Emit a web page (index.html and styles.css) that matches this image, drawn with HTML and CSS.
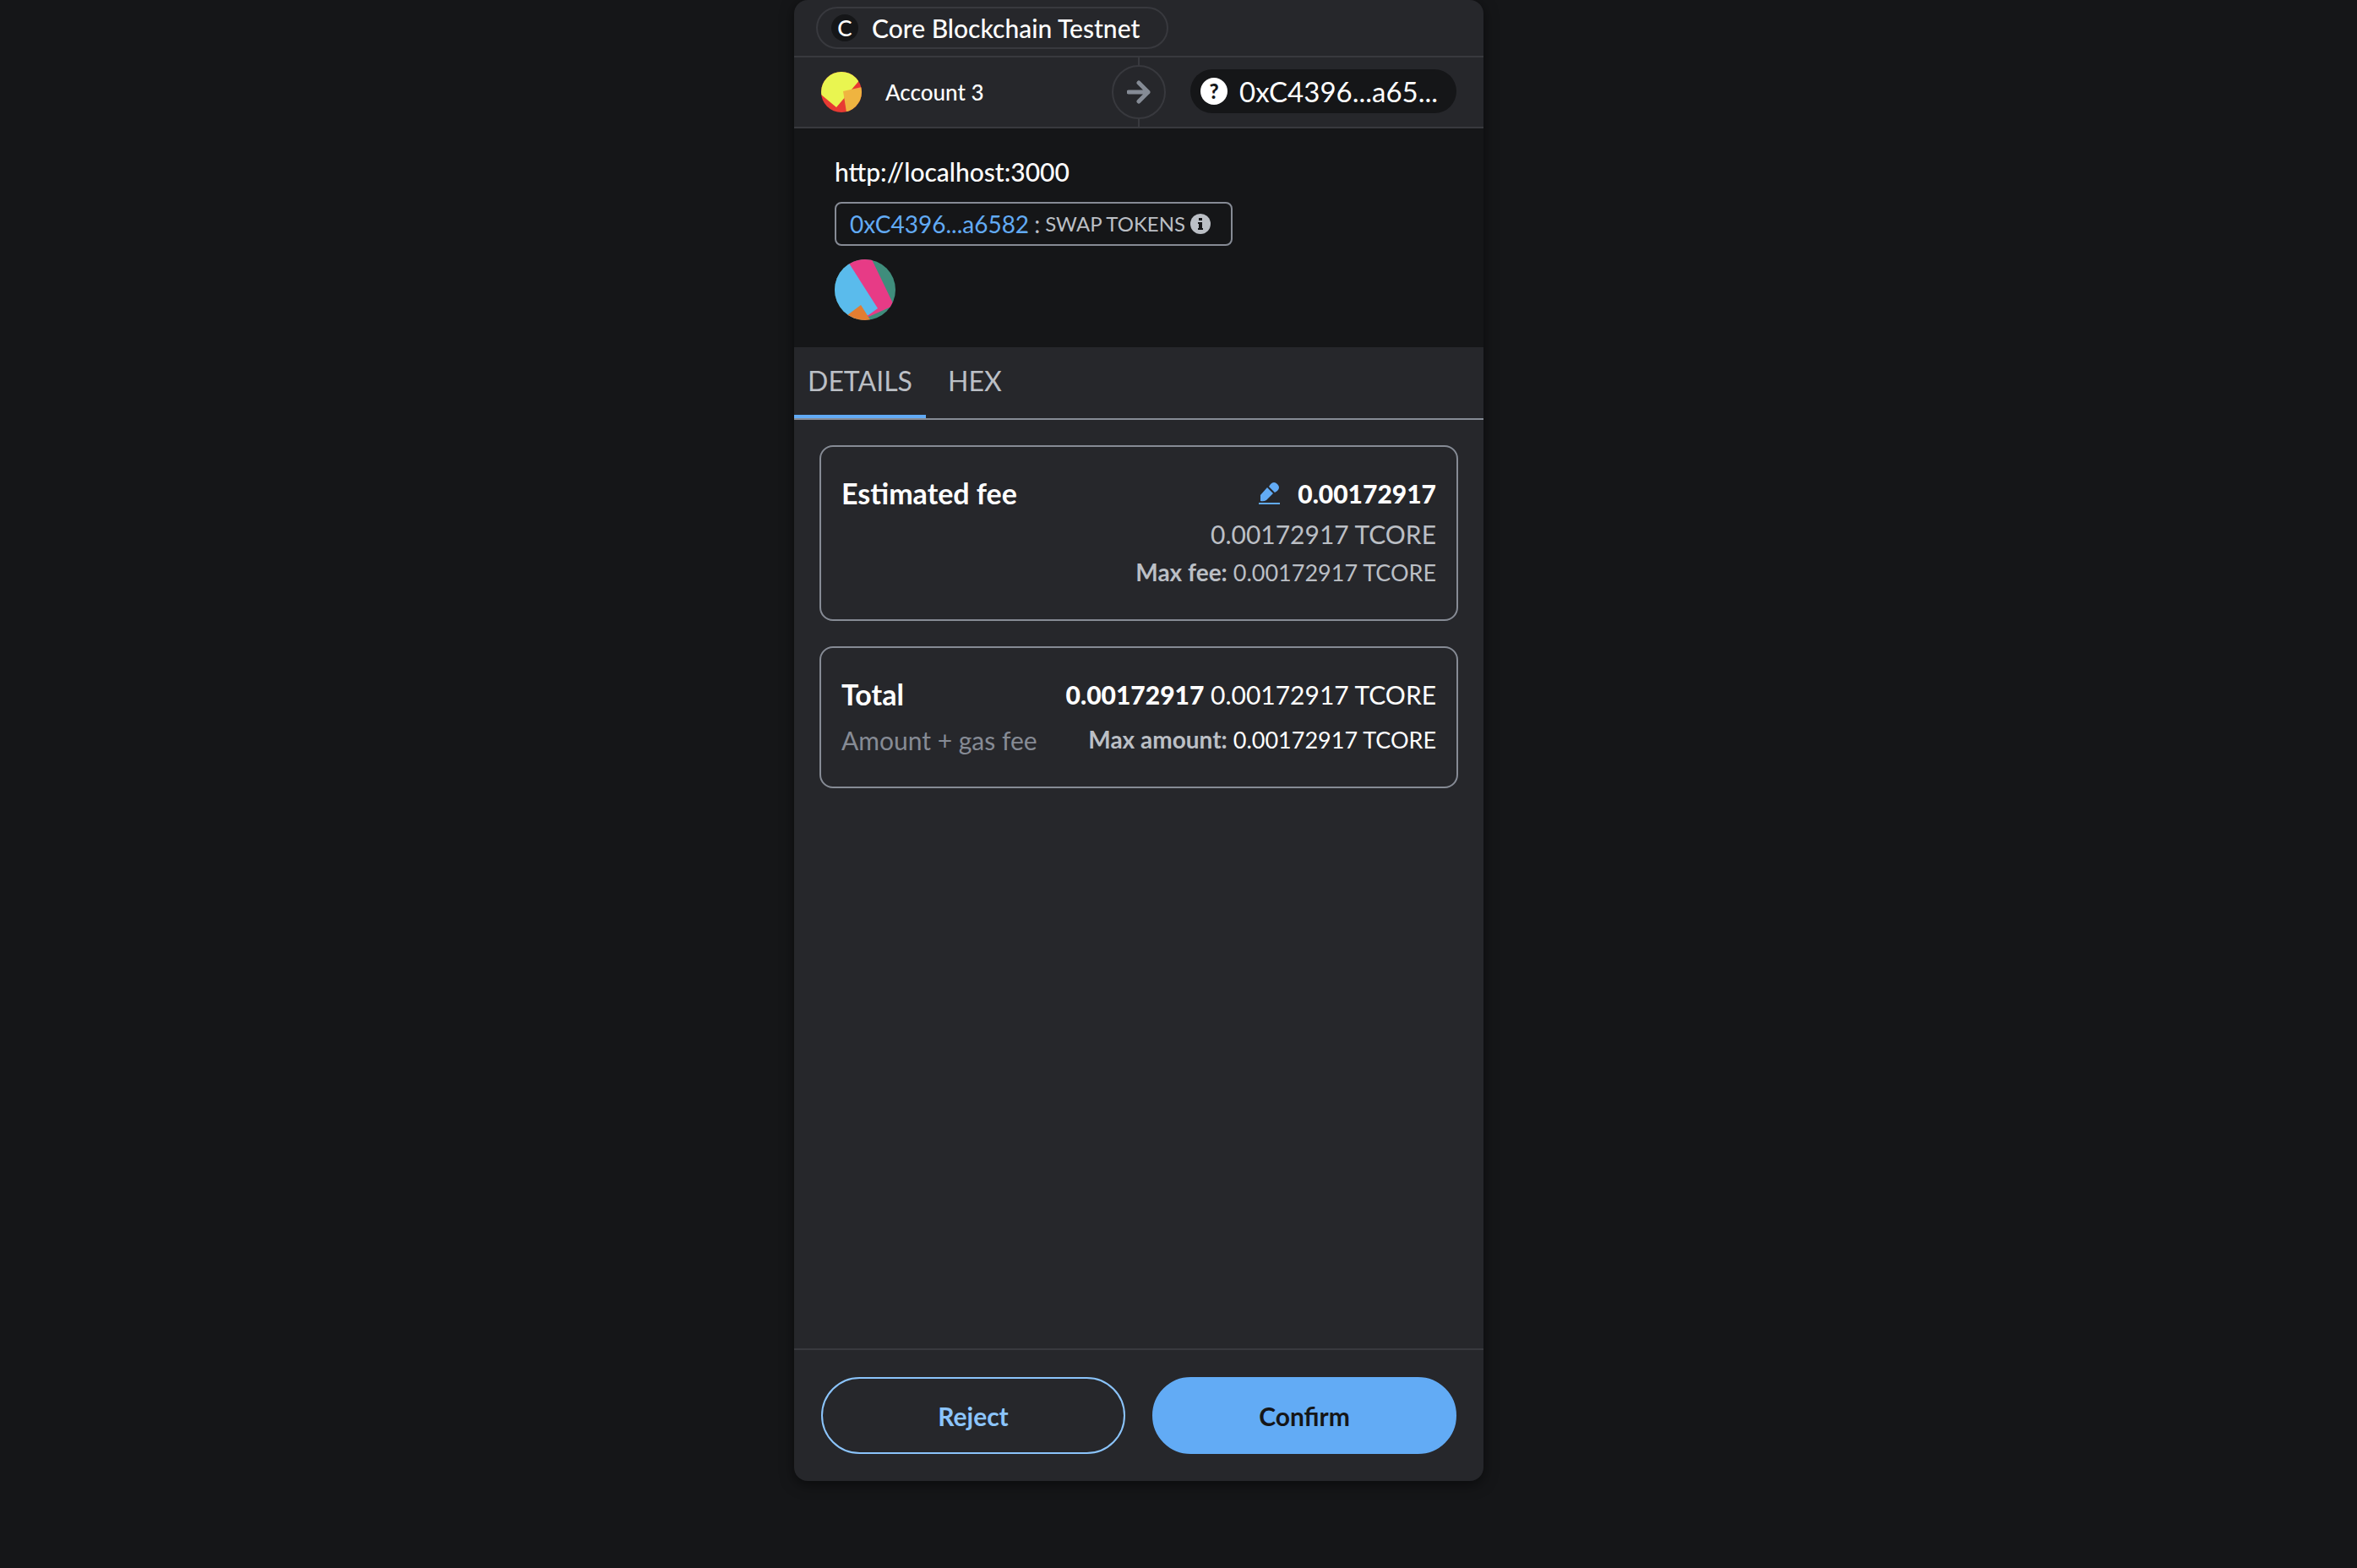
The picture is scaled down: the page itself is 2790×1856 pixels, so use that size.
FILE: index.html
```html
<!DOCTYPE html>
<html lang="en">
<head>
<meta charset="utf-8">
<title>Confirm transaction</title>
<link rel="stylesheet" href="styles.css">
</head>
<body>
<main class="panel">
  <header class="network-bar">
    <div class="network">
      <span class="network-icon">C</span>
      <span>Core Blockchain Testnet</span>
    </div>
  </header>

  <section class="parties">
    <div class="sender">
      <svg class="avatar-small" viewBox="0 0 48 48" aria-hidden="true">
        <clipPath id="sender-clip"><circle cx="24" cy="24" r="24"/></clipPath>
        <g clip-path="url(#sender-clip)">
          <rect width="48" height="48" fill="#e73a33"/>
          <path d="M0 0H48V7L18 42L0 27Z" fill="#e9f550"/>
          <path d="M26 23L48 18V48H30Z" fill="#efb440"/>
        </g>
      </svg>
      <span class="sender-name">Account 3</span>
    </div>
    <div class="arrow">
      <span class="arrow-circle">
        <svg width="28" height="28" viewBox="0 0 28 28" aria-hidden="true">
          <path d="M2 14H25M14 3L25 14L14 25" fill="none" stroke="#858b95" stroke-width="5" stroke-linecap="round" stroke-linejoin="round"/>
        </svg>
      </span>
    </div>
    <div class="recipient">
      <button class="recipient-pill" type="button">
        <span class="question">?</span>
        <span class="recipient-address">0xC4396...a65...</span>
      </button>
    </div>
  </section>

  <section class="summary">
    <div class="origin">http://localhost:3000</div>
    <div class="action">
      <a class="contract" href="#contract">0xC4396...a6582</a>
      <span class="colon">:</span>
      <span class="method">SWAP TOKENS</span>
      <svg class="info" viewBox="0 0 24 24" role="img" aria-label="Information">
        <circle cx="12" cy="12" r="12" fill="#bbbfc5"/>
        <path d="M10 5H14V8H10ZM9 10H14V17H15V19H9V17H10V12H9Z" fill="#151618"/>
      </svg>
    </div>
    <svg class="avatar-large" viewBox="0 0 72 72" aria-hidden="true">
      <clipPath id="contract-clip"><circle cx="36" cy="36" r="36"/></clipPath>
      <g clip-path="url(#contract-clip)">
        <rect width="72" height="72" fill="#3f8d7c"/>
        <path d="M17 5L12 -4H42L69 52L67 56L40 68L30 60Z" fill="#e73b86"/>
        <path d="M-4 0H14L51 58L40 66L20 72L0 72Z" fill="#5abbec"/>
        <path d="M15 66L31 54L43 73H15Z" fill="#e27d31"/>
      </g>
    </svg>
  </section>

  <nav class="tabs">
    <button class="tab tab-active" type="button">DETAILS</button>
    <button class="tab" type="button">HEX</button>
  </nav>

  <section class="details">
    <article class="card">
      <div class="row">
        <h2 class="label">Estimated fee</h2>
        <div class="fee">
          <button class="edit" type="button" aria-label="Edit fee">
            <svg width="26" height="26" viewBox="0 0 26 26" aria-hidden="true">
              <path d="M2 22V15L10 6L17 13L9 21Q6 23 2 22ZM12 5L14 2Q18 -2 22 2Q26 6 22 10L19 12Z" fill="#62abf5"/>
              <path d="M0 24H25V26H0Z" fill="#62abf5"/>
            </svg>
          </button>
          <strong class="amount">0.00172917</strong>
        </div>
      </div>
      <div class="fee-native">0.00172917 TCORE</div>
      <div class="fee-max"><strong class="caption">Max fee:</strong> 0.00172917 TCORE</div>
    </article>

    <article class="card">
      <div class="row">
        <h2 class="label">Total</h2>
        <div><strong class="amount">0.00172917</strong> 0.00172917 TCORE</div>
      </div>
      <div class="row row-sub">
        <span class="hint">Amount + gas fee</span>
        <span class="max"><strong class="caption">Max amount:</strong> 0.00172917 TCORE</span>
      </div>
    </article>
  </section>

  <footer class="actions">
    <button class="button button-secondary" type="button">Reject</button>
    <button class="button button-primary" type="button">Confirm</button>
  </footer>
</main>
</body>
</html>
```
FILE: styles.css
```css
*, *::before, *::after { box-sizing: border-box; }

body {
  margin: 0;
  min-height: 100vh;
  padding: 0 94px 103px 0;
  display: flex;
  flex-direction: column;
  align-items: center;
  background: #151618;
  color: #fff;
  font-family: Lato, "Open Sans", sans-serif;
  font-size: 30px;
  font-weight: 400;
  line-height: 40px;
}

button {
  margin: 0;
  padding: 0;
  border: 0;
  background: none;
  color: inherit;
  font: inherit;
  cursor: pointer;
}

.panel {
  flex: 1;
  width: 100%;
  max-width: 816px;
  display: flex;
  flex-direction: column;
  overflow: hidden;
  background: #26272b;
  border-radius: 16px;
  box-shadow: 0 4px 16px rgba(0, 0, 0, 0.5);
}

.network-bar {
  display: flex;
  padding: 8px 26px;
  border-bottom: 2px solid #38393e;
}

.network {
  height: 50px;
  display: flex;
  align-items: center;
  gap: 16px;
  padding: 0 32px 0 16px;
  border: 2px solid #38393e;
  border-radius: 25px;
  font-weight: 500;
}

.network-icon {
  width: 32px;
  height: 32px;
  border-radius: 50%;
  background: #151618;
  font-size: 26px;
  line-height: 32px;
  text-align: center;
}

.parties {
  height: 84px;
  display: grid;
  grid-template-columns: 1fr 64px 1fr;
  border-bottom: 2px solid #38393e;
}

.sender {
  display: flex;
  align-items: center;
  gap: 28px;
  padding-left: 32px;
}

.avatar-small { width: 48px; height: 48px; }

.sender-name { font-size: 26px; font-weight: 500; }

.arrow {
  display: flex;
  align-items: center;
  justify-content: center;
  background: linear-gradient(#38393e, #38393e) center / 2px 100% no-repeat;
}

.arrow-circle {
  width: 64px;
  height: 64px;
  display: flex;
  align-items: center;
  justify-content: center;
  background: #26272b;
  border: 2px solid #38393e;
  border-radius: 50%;
}

.recipient {
  display: flex;
  align-items: center;
  padding: 0 32px 2px 29px;
}

.recipient-pill {
  flex: 1;
  height: 52px;
  display: flex;
  align-items: center;
  gap: 14px;
  padding: 0 12px;
  border-radius: 26px;
  background: #151618;
  font-size: 33px;
}

.question {
  width: 32px;
  height: 32px;
  border-radius: 50%;
  background: #fff;
  color: #151618;
  font-size: 24px;
  font-weight: 900;
  line-height: 32px;
}

.summary {
  display: flex;
  flex-direction: column;
  align-items: flex-start;
  gap: 16px;
  padding: 32px 48px;
  background: #151618;
}

.origin { font-weight: 500; line-height: 39px; }

.action {
  height: 52px;
  display: flex;
  align-items: center;
  gap: 6px;
  padding: 0 24px 0 16px;
  border: 2px solid #868b95;
  border-radius: 8px;
  color: #bbbfc5;
}

.contract { color: #62abf5; font-size: 28px; text-decoration: none; }

.colon { font-size: 28px; }

.method { font-size: 24px; }

.info { width: 24px; height: 24px; }

.avatar-large { width: 72px; height: 72px; }

.tabs {
  display: flex;
  gap: 10px;
  border-bottom: 2px solid #868b95;
}

.tab {
  height: 84px;
  padding: 0 16px;
  border-bottom: 4px solid transparent;
  color: #bbbfc5;
  font-size: 32px;
}

.tab-active { min-width: 156px; border-color: #62abf5; }

.details {
  flex: 1;
  display: flex;
  flex-direction: column;
  gap: 30px;
  padding: 30px;
}

.card {
  padding: 33px 24px 35px;
  border: 2px solid #868b95;
  border-radius: 16px;
}

.row {
  display: flex;
  align-items: center;
  justify-content: space-between;
  line-height: 44px;
}

.row-sub { padding-top: 12px; line-height: 40px; }

.label { margin: 0; font-size: 34px; font-weight: 700; }

.fee { display: flex; align-items: center; gap: 20px; }

.edit { display: flex; }

.amount { font-weight: 900; }

.fee-native {
  color: #bbbfc5;
  line-height: 52px;
  text-align: right;
}

.fee-max { color: #bbbfc5; font-size: 27px; text-align: right; }

.max { font-size: 27px; }

.caption { color: #bbbfc5; font-size: 28px; font-weight: 700; line-height: 1; }

.hint { color: #868b95; }

.actions {
  display: flex;
  gap: 32px;
  padding: 32px;
  border-top: 2px solid #38393e;
}

.button {
  flex: 1;
  height: 91px;
  border: 2px solid #62abf5;
  border-radius: 46px;
  font-weight: 700;
}

.button-secondary { border-color: #8bc4fb; color: #8bc4fb; }

.button-primary { background: #62abf5; color: #151618; }
```
